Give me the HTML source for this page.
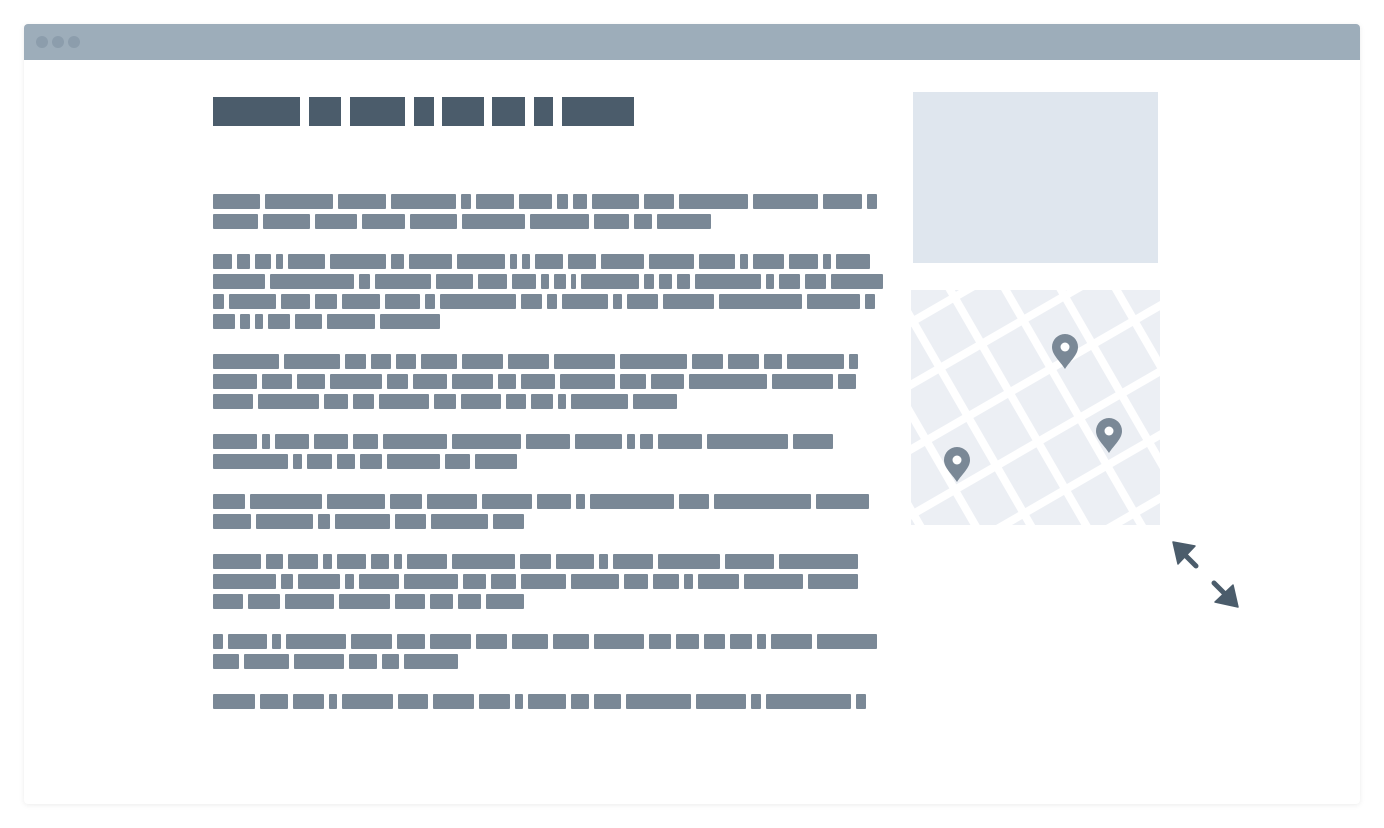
<!DOCTYPE html>
<html><head><meta charset="utf-8">
<style>
html,body{margin:0;padding:0;background:#fff;width:1384px;height:828px;overflow:hidden;font-family:"Liberation Sans",sans-serif}
.win{position:absolute;left:24px;top:24px;width:1336px;height:780px;background:#fff;border-radius:4px;box-shadow:0 1px 6px rgba(0,0,0,0.08);overflow:hidden}
.bar{position:absolute;left:0;top:0;width:100%;height:36px;background:#9dadba}
.dot{position:absolute;top:12px;width:12px;height:12px;border-radius:50%;background:#8c9dac}
.t{position:absolute;top:97px;height:29px;background:#4b5c6b}
.row{position:absolute;left:213px;height:15px;display:flex;gap:5px}
.row span{display:block;height:15px;background:#7a8896;border-radius:1px;flex-basis:0}
.img{position:absolute;left:913px;top:92px;width:245px;height:171px;background:#dfe6ee}
</style></head><body>
<div class="win">
 <div class="bar"><div class="dot" style="left:12px"></div><div class="dot" style="left:28px"></div><div class="dot" style="left:44px"></div></div>
</div>
<div class="t" style="left:213px;width:87px"></div>
<div class="t" style="left:309px;width:32px"></div>
<div class="t" style="left:350px;width:55px"></div>
<div class="t" style="left:414px;width:20px"></div>
<div class="t" style="left:442px;width:42px"></div>
<div class="t" style="left:492px;width:33px"></div>
<div class="t" style="left:534px;width:19px"></div>
<div class="t" style="left:562px;width:72px"></div>
<div class="img"></div>
<div id="rows"></div>
<svg style="position:absolute;left:0;top:0" width="1384" height="828">
 <defs><clipPath id="c"><rect x="911" y="290" width="249" height="235"/></clipPath></defs>
 <g clip-path="url(#c)">
  <rect x="911" y="290" width="249" height="235" fill="#eceff4"/>
  <g transform="translate(911,290) rotate(-30)" stroke="#fff" stroke-width="8">
   <line x1="-200" y1="28" x2="400" y2="28"/>
   <line x1="-200" y1="82" x2="400" y2="82"/>
   <line x1="-200" y1="138" x2="400" y2="138"/>
   <line x1="-200" y1="195" x2="400" y2="195"/>
   <line x1="-200" y1="250" x2="400" y2="250"/>
   <line x1="-200" y1="305" x2="400" y2="305"/>
   <line x1="-110" y1="-100" x2="-110" y2="500"/>
   <line x1="-62" y1="-100" x2="-62" y2="500"/>
   <line x1="-14" y1="-100" x2="-14" y2="500"/>
   <line x1="34" y1="-100" x2="34" y2="500"/>
   <line x1="82" y1="-100" x2="82" y2="500"/>
   <line x1="130" y1="-100" x2="130" y2="500"/>
   <line x1="178" y1="-100" x2="178" y2="500"/>
   <line x1="222" y1="-100" x2="222" y2="500"/>
  </g>
 </g>
 <g fill="#7a8896">
  <g transform="translate(1065,347)"><path d="M-13,0 A13,13 0 1,1 13,0 C13,8 5,14 0,22 C-5,14 -13,8 -13,0Z"/><circle cy="0" r="4.5" fill="#fff"/></g>
  <g transform="translate(1109,431)"><path d="M-13,0 A13,13 0 1,1 13,0 C13,8 5,14 0,22 C-5,14 -13,8 -13,0Z"/><circle cy="0" r="4.5" fill="#fff"/></g>
  <g transform="translate(957,460)"><path d="M-13,0 A13,13 0 1,1 13,0 C13,8 5,14 0,22 C-5,14 -13,8 -13,0Z"/><circle cy="0" r="4.5" fill="#fff"/></g>
 </g>
 <g fill="#4b5c6b" stroke="#4b5c6b">
  <line x1="1185" y1="555" x2="1196" y2="566" stroke-width="5" stroke-linecap="round"/>
  <polygon points="1173,542 1178,564 1195,546" stroke-width="1.5" stroke-linejoin="round"/>
  <line x1="1214" y1="583" x2="1226" y2="595" stroke-width="5" stroke-linecap="round"/>
  <polygon points="1238,607 1215,602 1233,585" stroke-width="1.5" stroke-linejoin="round"/>
 </g>
</svg>
<script>
var R=[
[194,877,[47,67,48,64,10,38,33,11,14,46,30,69,64,39,10]],
[214,711,[45,47,42,43,46,63,59,35,18,54]],
[254,870,[38,28,32,14,76,114,26,88,98,16,16,56,58,88,92,74,16,62,60,16,70]],
[274,883,[108,174,24,116,76,62,50,16,24,12,120,20,28,26,138,16,44,44,108]],
[294,875,[24,102,62,48,84,76,22,164,46,22,100,18,68,110,182,114,22]],
[314,440,[48,20,18,46,58,104,128]],
[354,858,[140,118,44,42,42,76,86,86,128,142,66,64,38,120,20]],
[374,856,[96,66,62,114,46,74,90,40,74,120,58,72,170,134,40]],
[394,677,[88,134,54,46,110,48,88,46,48,18,126,96]],
[434,833,[96,18,74,74,56,140,152,96,102,18,28,96,178,88]],
[454,517,[164,20,54,40,48,116,54,92]],
[494,869,[70,158,128,70,110,108,76,20,184,66,212,116]],
[514,524,[82,124,26,118,68,124,66]],
[554,858,[106,36,66,20,64,38,18,88,138,68,84,20,88,136,106,174]],
[574,858,[138,26,92,20,86,118,50,54,100,104,52,56,20,90,130,108]],
[594,524,[66,68,106,110,66,50,50,82]],
[634,877,[22,84,20,130,88,60,88,68,78,78,108,48,48,46,48,20,88,130]],
[654,458,[58,98,108,62,38,118]],
[694,866,[92,62,66,18,112,66,90,68,18,82,40,58,142,110,22,186,22]]
];
var h='';
R.forEach(function(r){h+='<div class="row" style="top:'+r[0]+'px;width:'+(r[1]-213)+'px">';
r[2].forEach(function(w){h+='<span style="flex-grow:'+w+'"></span>';});h+='</div>';});
document.getElementById('rows').innerHTML=h;
</script>
</body></html>
